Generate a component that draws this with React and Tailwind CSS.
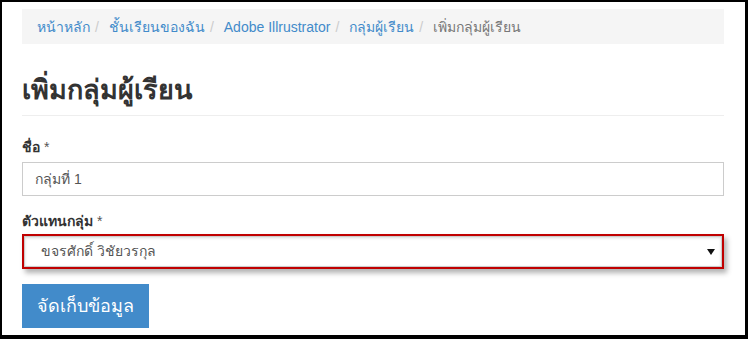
import React from 'react';

const crumbs = [
  { label: 'หน้าหลัก', href: '#' },
  { label: 'ชั้นเรียนของฉัน', href: '#' },
  { label: 'Adobe Illrustrator', href: '#' },
  { label: 'กลุ่มผู้เรียน', href: '#' },
];

const App = () => {
  return (
    <div
      className="w-[748px] h-[339px] overflow-hidden bg-white border-black border-t-2 border-l-2 border-r-[3px] border-b-4 text-[14px] text-[#333]"
      style={{ fontFamily: '"Liberation Sans", Arial, sans-serif' }}
    >
      <div className="pl-5 pr-[21px] pt-[7px]">
        {/* Breadcrumb */}
        <ol className="flex items-center bg-[#f5f5f5] h-[35px] px-[15px] leading-5 whitespace-nowrap">
          {crumbs.map((c) => (
            <li key={c.label} className="flex items-center shrink-0">
              <a href={c.href} className="text-[#428bca]">{c.label}</a>
              <span className="pl-[5px] pr-[10px] text-[#ccc]">/</span>
            </li>
          ))}
          <li className="text-[#777]">เพิ่มกลุ่มผู้เรียน</li>
        </ol>

        {/* Page header */}
        <div className="mt-[28px] pb-[6px] border-b border-[#eee]">
          <h1 className="text-[27px] font-bold leading-[37px] text-[#333]">เพิ่มกลุ่มผู้เรียน</h1>
        </div>

        {/* Form */}
        <form className="mt-[21px]">
          <div className="mb-[15px]">
            <label className="block font-bold leading-5 mb-[5px]">
              ชื่อ <span className="font-normal text-[#555]">*</span>
            </label>
            <input
              type="text"
              defaultValue="กลุ่มที่ 1"
              className="block w-full h-[34px] px-3 border border-[#ccc] text-[#555] text-[14px] outline-none"
            />
          </div>

          <div className="mb-[15px]">
            <label className="block font-bold leading-5 mb-[3px]">
              ตัวแทนกลุ่ม <span className="font-normal text-[#555]">*</span>
            </label>
            <div className="relative border-2 border-[#c00000] shadow-[3px_4px_5px_rgba(0,0,0,0.3)]">
              <div className="flex items-center justify-between h-[31px] pl-[16px] pr-[6px] border border-[#ccc] shadow-[inset_0_1px_3px_rgba(0,0,0,0.15)] text-[#555]">
                <span>ขจรศักดิ์ วิชัยวรกุล</span>
                <svg width="8" height="6" viewBox="0 0 8 6" className="mt-[1px]">
                  <path d="M0 0 H8 L4 6 Z" fill="#111" />
                </svg>
              </div>
            </div>
          </div>

          <button
            type="button"
            className="w-[127px] h-[44px] bg-[#428bca] text-white text-[18px] leading-6"
          >
            จัดเก็บข้อมูล
          </button>
        </form>
      </div>
    </div>
  );
};

export default App;
